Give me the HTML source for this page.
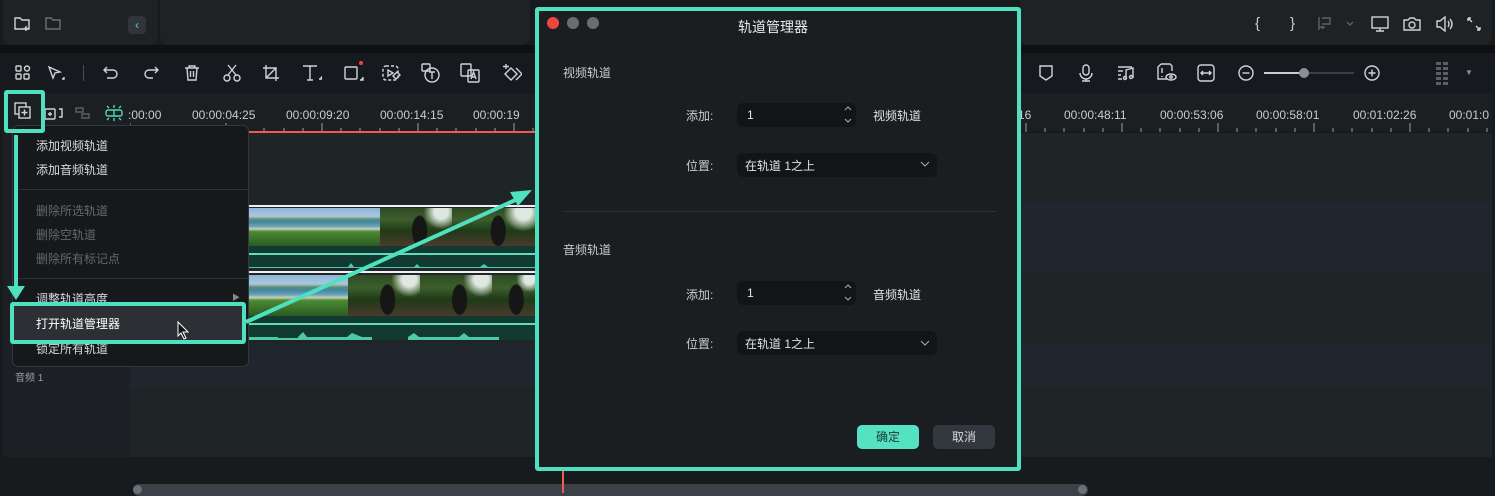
<!DOCTYPE html>
<html><head><meta charset="utf-8"><style>
*{box-sizing:border-box;margin:0;padding:0}
body{width:1495px;height:493px;background:#181b1e;position:relative;overflow:hidden;font-family:"Liberation Sans","Noto Sans CJK SC",sans-serif;color:#d8dadc}
.a{position:absolute}
.ic{position:absolute;stroke:#d0d3d6;fill:none;stroke-width:1.4}
.t{font-size:12px;color:#c9ccce;position:absolute}
.row{position:absolute;left:3px;right:3px}
.thumbA{background:linear-gradient(180deg,#8fb4d6 0%,#a9c8e0 22%,#5f8a70 30%,#3f8aa8 38%,#6aa2b8 48%,#c9d0b8 55%,#4a8a34 62%,#2c5a22 100%)}
.thumbB{background:radial-gradient(ellipse 8px 16px at 55% 60%,#151615 90%,transparent 100%),radial-gradient(circle at 85% 10%,#dfe8e0 10%,transparent 25%),linear-gradient(180deg,#2e4a24 0%,#3d5e2c 30%,#1f3a18 60%,#4a3a2a 100%)}
.mi{position:absolute;left:36px;font-size:12px}
</style></head><body>
<div class="a" style="left:0;top:45px;width:1495px;height:8px;background:#0e1012"></div>
<!-- top panels -->
<div class="a" style="left:3px;top:0;width:155px;height:45px;background:#1f2225;border-radius:0 0 8px 8px"></div>
<div class="a" style="left:160px;top:0;width:370px;height:45px;background:#1f2225;border-radius:0 0 8px 8px"></div>
<div class="a" style="left:1020px;top:0;width:472px;height:45px;background:#1f2225;border-radius:0 0 8px 8px"></div>
<svg class="ic" style="left:14px;top:16px" width="18" height="16"><path d="M1 2h5l2 2h7v9H1z M12 10v5 M9.5 12.5h5" stroke="#cfd2d4"/></svg>
<svg class="ic" style="left:45px;top:16px" width="18" height="16"><path d="M1 2h5l2 2h7v9H1z" stroke="#6a6e72"/></svg>
<div class="a" style="left:128px;top:16px;width:18px;height:18px;border-radius:4px;background:#2f3539;color:#4fd8b8;font-size:12px;text-align:center;line-height:18px">‹</div>
<div class="t" style="left:1255px;top:15px;font-size:15px">{</div>
<div class="t" style="left:1290px;top:15px;font-size:15px">}</div>
<svg class="ic" style="left:1317px;top:16px" width="40" height="16"><path d="M2 1v13M5 2h8v6H5M8 11h-4l2 2" stroke="#5d6266"/><path d="M30 6l3 3 3-3" stroke="#5d6266"/></svg>
<svg class="ic" style="left:1371px;top:16px" width="20" height="17"><rect x="1" y="1" width="16" height="11" stroke="#d0d3d6"/><path d="M9 12v3M5 15h8" /></svg>
<svg class="ic" style="left:1403px;top:16px" width="18" height="16"><path d="M1 4h4l2-2h4l2 2h4v10H1z"/><circle cx="9" cy="9" r="3"/></svg>
<svg class="ic" style="left:1435px;top:16px" width="20" height="16"><path d="M2 5h3l5-4v14l-5-4H2z M13 5q2 3 0 6 M15 3q4 5 0 10"/></svg>
<svg class="ic" style="left:1466px;top:16px" width="16" height="16"><path d="M2 2l4 4M2 2v3M2 2h3 M14 14l-4-4M14 14v-3M14 14h-3"/></svg>
<!-- toolbar -->
<div class="a" style="left:3px;top:53px;width:1489px;height:40px;background:#161a1e;border-radius:8px 8px 0 0"></div>
<svg class="ic" style="left:15px;top:65px" width="16" height="16"><rect x="1" y="1" width="5" height="5" rx="1"/><circle cx="12" cy="3.5" r="2.5"/><rect x="1" y="9" width="5" height="5" rx="1"/><rect x="9" y="9" width="5" height="5" rx="1"/></svg>
<svg class="ic" style="left:47px;top:65px" width="18" height="16"><path d="M2 2l11 5-5 1-2 5z"/><path d="M15 14h2v-2" fill="#d0d3d6"/></svg>
<div class="a" style="left:83px;top:65px;width:1px;height:16px;background:#4a4e52"></div>
<svg class="ic" style="left:103px;top:65px" width="16" height="16"><path d="M4 2L1 5l3 3M1 5h9a4 4 0 010 8H4"/></svg>
<svg class="ic" style="left:143px;top:65px" width="16" height="16"><path d="M12 2l3 3-3 3M15 5H6a4 4 0 000 8h4"/></svg>
<svg class="ic" style="left:184px;top:65px" width="16" height="16"><path d="M1 3h14M5 3V1h6v2M3 3l1 12h8l1-12M6.5 6v6M9.5 6v6"/></svg>
<svg class="ic" style="left:223px;top:64px" width="18" height="18"><circle cx="4" cy="14" r="3"/><circle cx="14" cy="14" r="3"/><path d="M5 11L13 1M13 11L5 1"/></svg>
<svg class="ic" style="left:262px;top:64px" width="18" height="18"><path d="M4 1v13h13M1 4h13v13M4 14L14 4"/></svg>
<svg class="ic" style="left:302px;top:64px" width="20" height="18"><path d="M1 2h14M8 2v14M5 16h6"/><path d="M17 15h3v-3" fill="#d0d3d6"/></svg>
<svg class="ic" style="left:344px;top:64px" width="20" height="18"><rect x="1" y="3" width="12" height="12" rx="1"/><path d="M16 16h3v-3" fill="#d0d3d6"/></svg>
<div class="a" style="left:359px;top:61px;width:4px;height:4px;border-radius:50%;background:#f0453f"></div>
<svg class="ic" style="left:382px;top:64px" width="20" height="18"><rect x="1" y="2" width="15" height="14" rx="3" stroke-dasharray="3 2"/><path d="M6 6l5 3-5 3z M11 12l4-4 3 3-4 4z"/></svg>
<svg class="ic" style="left:421px;top:63px" width="20" height="20"><rect x="1" y="1" width="8" height="7" rx="1"/><circle cx="11" cy="12" r="7"/><path d="M8 9h6M11 9v7"/></svg>
<svg class="ic" style="left:460px;top:63px" width="20" height="20"><rect x="1" y="1" width="10" height="12" rx="1"/><rect x="8" y="7" width="11" height="12" rx="1"/><path d="M11 16l2.5-7 2.5 7M12 14h3"/></svg>
<svg class="ic" style="left:502px;top:63px" width="20" height="20"><path d="M4 1v5M1 3.5h6 M9 5l6 6-6 6-6-6z M14 5l6 6-6 6"/></svg>
<svg class="ic" style="left:1038px;top:64px" width="16" height="18"><path d="M2 2h12v10l-6 4-6-4z"/></svg>
<svg class="ic" style="left:1078px;top:64px" width="16" height="18"><rect x="5" y="1" width="6" height="10" rx="3"/><path d="M2 9a6 6 0 0012 0M8 15v2M4 17h8"/></svg>
<svg class="ic" style="left:1117px;top:64px" width="18" height="18"><path d="M1 3h14M1 7h5M1 11h3M1 15h4 M9 15V6l7-2v10"/><circle cx="8" cy="14" r="1.5"/><circle cx="14" cy="13" r="1.5"/></svg>
<svg class="ic" style="left:1157px;top:63px" width="20" height="20"><path d="M4 1h9l2 2v5M4 1L1 4v12h9"/><path d="M5 5v5M5 13v1"/><ellipse cx="14" cy="14" rx="5" ry="3"/><circle cx="14" cy="14" r="1.2"/></svg>
<svg class="ic" style="left:1197px;top:64px" width="18" height="18"><rect x="1" y="1" width="16" height="16" rx="3"/><path d="M4 9h10M6 7l-2 2 2 2M12 7l2 2-2 2"/></svg>
<svg class="ic" style="left:1238px;top:65px" width="16" height="16"><circle cx="8" cy="8" r="7"/><path d="M4.5 8h7"/></svg>
<div class="a" style="left:1264px;top:72px;width:40px;height:2px;background:#c9ccce"></div>
<div class="a" style="left:1304px;top:72px;width:50px;height:2px;background:#3b4044"></div>
<div class="a" style="left:1299px;top:68px;width:10px;height:10px;border-radius:50%;background:#8a8f93"></div>
<svg class="ic" style="left:1364px;top:65px" width="16" height="16"><circle cx="8" cy="8" r="7"/><path d="M4.5 8h7M8 4.5v7"/></svg>
<svg class="a" style="left:1436px;top:62px" width="16" height="24"><g fill="#5a5f63"><rect x="0" y="0" width="5" height="3"/><rect x="7" y="0" width="5" height="3"/><rect x="0" y="5" width="5" height="3"/><rect x="7" y="5" width="5" height="3"/><rect x="0" y="10" width="5" height="3"/><rect x="7" y="10" width="5" height="3"/><rect x="0" y="15" width="5" height="3"/><rect x="7" y="15" width="5" height="3"/><rect x="0" y="20" width="5" height="3"/><rect x="7" y="20" width="5" height="3"/></g></svg>
<div class="a" style="left:1465px;top:68px;color:#8a8f93;font-size:8px">▼</div>
<!-- ruler -->
<div class="a" style="left:3px;top:93px;width:1489px;height:38px;background:#1c1f22"></div>
<svg class="ic" style="left:44px;top:105px" width="20" height="16"><rect x="1" y="4" width="10" height="10" rx="1"/><path d="M6 7v4M4 9h4" /><path d="M15 4h3v8h-3"/></svg>
<svg class="ic" style="left:74px;top:105px" width="20" height="16"><path d="M2 3h7v4H2zM8 9h7v4H8z" stroke="#5a5f63"/></svg>
<svg class="ic" style="left:104px;top:104px" width="20" height="18"><path d="M10 1v3M10 14v3M3 2l2 2M17 2l-2 2M3 16l2-2M17 16l-2-2" stroke="#4fd8b8"/><rect x="2" y="6" width="16" height="6" rx="2" stroke="#4fd8b8"/><path d="M10 6v6" stroke="#4fd8b8"/></svg>
<div class="a" style="top:108px;left:128px;font-size:12px;color:#c9ccce;white-space:nowrap">
<span class="a" style="left:0">:00:00</span><span class="a" style="left:64px">00:00:04:25</span><span class="a" style="left:158px">00:00:09:20</span><span class="a" style="left:252px">00:00:14:15</span><span class="a" style="left:345px">00:00:19</span>
<span class="a" style="left:890px">16</span><span class="a" style="left:936px">00:00:48:11</span><span class="a" style="left:1032px">00:00:53:06</span><span class="a" style="left:1128px">00:00:58:01</span><span class="a" style="left:1225px">00:01:02:26</span><span class="a" style="left:1321px">00:01:0</span></div>
<svg class="a" style="left:130px;top:120px" width="1365" height="12"><g stroke="#9a9ea2" stroke-width="1">
<path d="M0 3v9M96 3v9M192 3v9M288 3v9M384 3v9M896 3v9M992 3v9M1088 3v9M1184 3v9M1280 3v9"/>
<path d="M19 8v4M38 8v4M58 8v4M77 8v4M115 8v4M134 8v4M154 8v4M173 8v4M211 8v4M230 8v4M250 8v4M269 8v4M307 8v4M326 8v4M346 8v4M365 8v4M403 8v4M915 8v4M934 8v4M954 8v4M973 8v4M1011 8v4M1030 8v4M1050 8v4M1069 8v4M1107 8v4M1126 8v4M1146 8v4M1165 8v4M1203 8v4M1222 8v4M1242 8v4M1261 8v4M1299 8v4M1318 8v4M1338 8v4M1357 8v4"/></g></svg>
<div class="a" style="left:240px;top:131px;width:300px;height:2px;background:#f05a50"></div>
<!-- track rows -->
<div class="row" style="top:133px;height:70px;background:#1f2427"></div>
<div class="row" style="top:203px;height:70px;background:#20262d"></div>
<div class="row" style="top:273px;height:70px;background:#1f2427"></div>
<div class="row" style="top:343px;height:44px;background:#20262d"></div>
<div class="row" style="top:387px;height:70px;background:#1f2427"></div>
<div class="a" style="left:3px;top:133px;width:127px;height:324px;background:#1c2024"></div>
<div class="t" style="left:15px;top:369px;font-size:10px;color:#9a9ea2">音频 1</div>
<!-- clips -->
<div class="a" style="left:248px;top:205px;width:288px;height:2px;background:#f0f0f0"></div>
<div class="a thumbA" style="left:248px;top:208px;width:60px;height:38px"></div>
<div class="a thumbA" style="left:308px;top:208px;width:72px;height:38px"></div>
<div class="a thumbB" style="left:380px;top:208px;width:72px;height:38px"></div>
<div class="a thumbB" style="left:452px;top:208px;width:84px;height:38px"></div>
<div class="a" style="left:248px;top:246px;width:288px;height:22px;background:#123a30"></div>
<div class="a" style="left:248px;top:253px;width:288px;height:2px;background:#62d9bd"></div>
<svg class="a" style="left:248px;top:260px" width="288" height="8"><path d="M0 8V7h100l3-4 3 4h60l3-3 3 3h60l4-3 4 3h48V8z" fill="#4ec9a8"/></svg>
<div class="a" style="left:248px;top:271px;width:288px;height:2px;background:#f0f0f0"></div>
<div class="a thumbA" style="left:248px;top:275px;width:26px;height:41px"></div>
<div class="a thumbA" style="left:274px;top:275px;width:74px;height:41px"></div>
<div class="a thumbB" style="left:348px;top:275px;width:72px;height:41px"></div>
<div class="a thumbB" style="left:420px;top:275px;width:72px;height:41px"></div>
<div class="a thumbB" style="left:492px;top:275px;width:44px;height:41px"></div>
<div class="a" style="left:248px;top:316px;width:288px;height:24px;background:#123a30"></div>
<div class="a" style="left:248px;top:323px;width:288px;height:2px;background:#62d9bd"></div>
<svg class="a" style="left:248px;top:328px" width="288" height="12"><path d="M0 12V9h30v1h20V9l5-5 4 5h40l5-4 10 4h10V12z M160 12V9l6-4 5 4h40l5-4 5 4h30V12z" fill="#4ec9a8"/></svg>
<!-- bottom -->
<div class="a" style="left:133px;top:484px;width:955px;height:12px;border-radius:6px;background:#3a4148"></div>
<div class="a" style="left:133px;top:485px;width:9px;height:9px;border-radius:50%;background:#6a7075"></div>
<div class="a" style="left:1078px;top:485px;width:9px;height:9px;border-radius:50%;background:#6a7075"></div>
<div class="a" style="left:562px;top:470px;width:2px;height:23px;background:#f05a50"></div>
<!-- menu -->
<div class="a" style="left:12px;top:125px;width:237px;height:242px;background:#16191c;border:1px solid #34383c;border-radius:6px"></div>
<div class="mi" style="top:137px">添加视频轨道</div>
<div class="mi" style="top:161px">添加音频轨道</div>
<div class="a" style="left:18px;top:189px;width:230px;height:1px;background:#2e3236"></div>
<div class="mi" style="top:202px;color:#64686c">删除所选轨道</div>
<div class="mi" style="top:226px;color:#64686c">删除空轨道</div>
<div class="mi" style="top:250px;color:#64686c">删除所有标记点</div>
<div class="a" style="left:18px;top:278px;width:230px;height:1px;background:#2e3236"></div>
<div class="mi" style="top:290px">调整轨道高度</div>
<div class="a" style="left:232px;top:292px;font-size:8px;color:#888">▶</div>
<div class="a" style="left:14px;top:306px;width:230px;height:34px;background:#2c3034"></div>
<div class="mi" style="top:315px;color:#fff">打开轨道管理器</div>
<div class="mi" style="top:340px">锁定所有轨道</div>
<svg class="a" style="left:176px;top:320px" width="14" height="20"><path d="M2 2v14l3-3 3 6 2-1-3-6h5z" fill="#111" stroke="#fff" stroke-width="1"/></svg>
<!-- highlights -->
<div class="a" style="left:4px;top:90px;width:41px;height:43px;border:4px solid #4fe0c0;border-radius:3px"></div>
<svg class="ic" style="left:14px;top:102px" width="20" height="20"><rect x="1" y="1" width="11" height="11"/><rect x="5" y="5" width="11" height="11" fill="#1c1f22"/><path d="M10.5 7.5v6M7.5 10.5h6"/></svg>
<div class="a" style="left:10px;top:302px;width:236px;height:42px;border:4px solid #4fe0c0;border-radius:3px"></div>
<svg class="a" style="left:0;top:0" width="1495" height="493"><g stroke="#4fe0c0" stroke-width="4" fill="#4fe0c0">
<path d="M16 135V288" fill="none"/><path d="M7 286h18l-9 14z" stroke="none"/>
<path d="M246 322L522 197" fill="none"/><path d="M532 190l-22 2 8 14z" stroke="none"/></g></svg>
<!-- dialog -->
<div class="a" style="left:535px;top:7px;width:486px;height:464px;border:4px solid #4fe0c0;background:#1b1e21;border-radius:3px"></div>
<div class="a" style="left:547px;top:17px;width:12px;height:12px;border-radius:50%;background:#f0453f"></div>
<div class="a" style="left:567px;top:17px;width:12px;height:12px;border-radius:50%;background:#6a6d70"></div>
<div class="a" style="left:587px;top:17px;width:12px;height:12px;border-radius:50%;background:#6a6d70"></div>
<div class="a" style="left:738px;top:17px;font-size:14px;color:#e8e9ea">轨道管理器</div>
<div class="t" style="left:563px;top:64px">视频轨道</div>
<div class="t" style="left:686px;top:107px">添加:</div>
<div class="a" style="left:737px;top:103px;width:119px;height:24px;border-radius:6px;background:#121518"></div>
<div class="t" style="left:747px;top:108px;color:#e0e2e3">1</div>
<svg class="ic" style="left:844px;top:106px" width="8" height="18"><path d="M1 4l3-3 3 3M1 13l3 3 3-3" stroke="#aaa" stroke-width="1"/></svg>
<div class="t" style="left:873px;top:107px;color:#e0e2e3">视频轨道</div>
<div class="t" style="left:686px;top:157px">位置:</div>
<div class="a" style="left:737px;top:153px;width:200px;height:24px;border-radius:6px;background:#121518"></div>
<div class="t" style="left:745px;top:157px;color:#e0e2e3">在轨道 1之上</div>
<svg class="ic" style="left:920px;top:161px" width="10" height="6"><path d="M1 1l4 4 4-4" stroke="#aaa" stroke-width="1"/></svg>
<div class="a" style="left:563px;top:211px;width:433px;height:1px;background:#2e3236"></div>
<div class="t" style="left:563px;top:241px">音频轨道</div>
<div class="t" style="left:686px;top:286px">添加:</div>
<div class="a" style="left:737px;top:281px;width:119px;height:24px;border-radius:6px;background:#121518"></div>
<div class="t" style="left:747px;top:286px;color:#e0e2e3">1</div>
<svg class="ic" style="left:844px;top:284px" width="8" height="18"><path d="M1 4l3-3 3 3M1 13l3 3 3-3" stroke="#aaa" stroke-width="1"/></svg>
<div class="t" style="left:873px;top:286px;color:#e0e2e3">音频轨道</div>
<div class="t" style="left:686px;top:335px">位置:</div>
<div class="a" style="left:737px;top:331px;width:200px;height:24px;border-radius:6px;background:#121518"></div>
<div class="t" style="left:745px;top:335px;color:#e0e2e3">在轨道 1之上</div>
<svg class="ic" style="left:920px;top:340px" width="10" height="6"><path d="M1 1l4 4 4-4" stroke="#aaa" stroke-width="1"/></svg>
<div class="a" style="left:857px;top:425px;width:62px;height:24px;border-radius:5px;background:#55e2c2;color:#1b3b33;font-size:12px;text-align:center;line-height:24px">确定</div>
<div class="a" style="left:933px;top:425px;width:62px;height:24px;border-radius:5px;background:#33383e;color:#d8dadc;font-size:12px;text-align:center;line-height:24px">取消</div>
</body></html>
